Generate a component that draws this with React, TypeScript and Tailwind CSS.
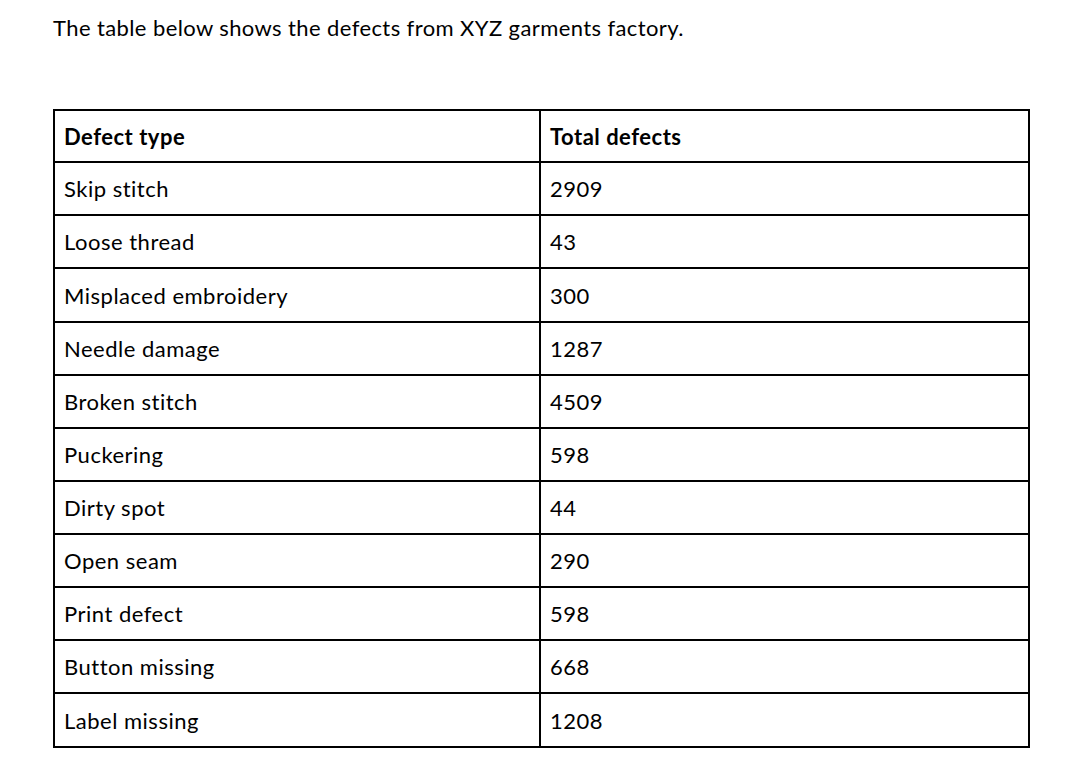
import React from 'react';

const rows: [string, string][] = [
  ['Skip stitch', '2909'],
  ['Loose thread', '43'],
  ['Misplaced embroidery', '300'],
  ['Needle damage', '1287'],
  ['Broken stitch', '4509'],
  ['Puckering', '598'],
  ['Dirty spot', '44'],
  ['Open seam', '290'],
  ['Print defect', '598'],
  ['Button missing', '668'],
  ['Label missing', '1208'],
];

const App = () => {
  return (
    <main className="w-[1077px] h-[776px] bg-white text-black font-['Lato',sans-serif] overflow-hidden">
      <p className="pl-[53px] pt-[15px] text-[22px] leading-[26px] tracking-[0.4px]">
        The table below shows the defects from XYZ garments factory.
      </p>

      <div className="ml-[53px] mt-[68px] w-[977px] border-2 border-black flex flex-col text-[22px] tracking-[0.5px]">
        <div className="flex h-[52px] border-b-2 border-black font-bold">
          <div className="w-[486px] border-r-2 border-black flex items-center pl-[9px]">Defect type</div>
          <div className="flex-1 flex items-center pl-[9px]">Total defects</div>
        </div>
        {rows.map(([type, total], i) => {
          const last = i === rows.length - 1;
          const h = last ? 'h-[52px]' : i === 2 ? 'h-[54px]' : 'h-[53px]';
          return (
            <div key={type} className={last ? `flex ${h}` : `flex ${h} border-b-2 border-black`}>
              <div className="w-[486px] border-r-2 border-black flex items-center pl-[9px]">{type}</div>
              <div className="flex-1 flex items-center pl-[9px]">{total}</div>
            </div>
          );
        })}
      </div>
    </main>
  );
};

export default App;
